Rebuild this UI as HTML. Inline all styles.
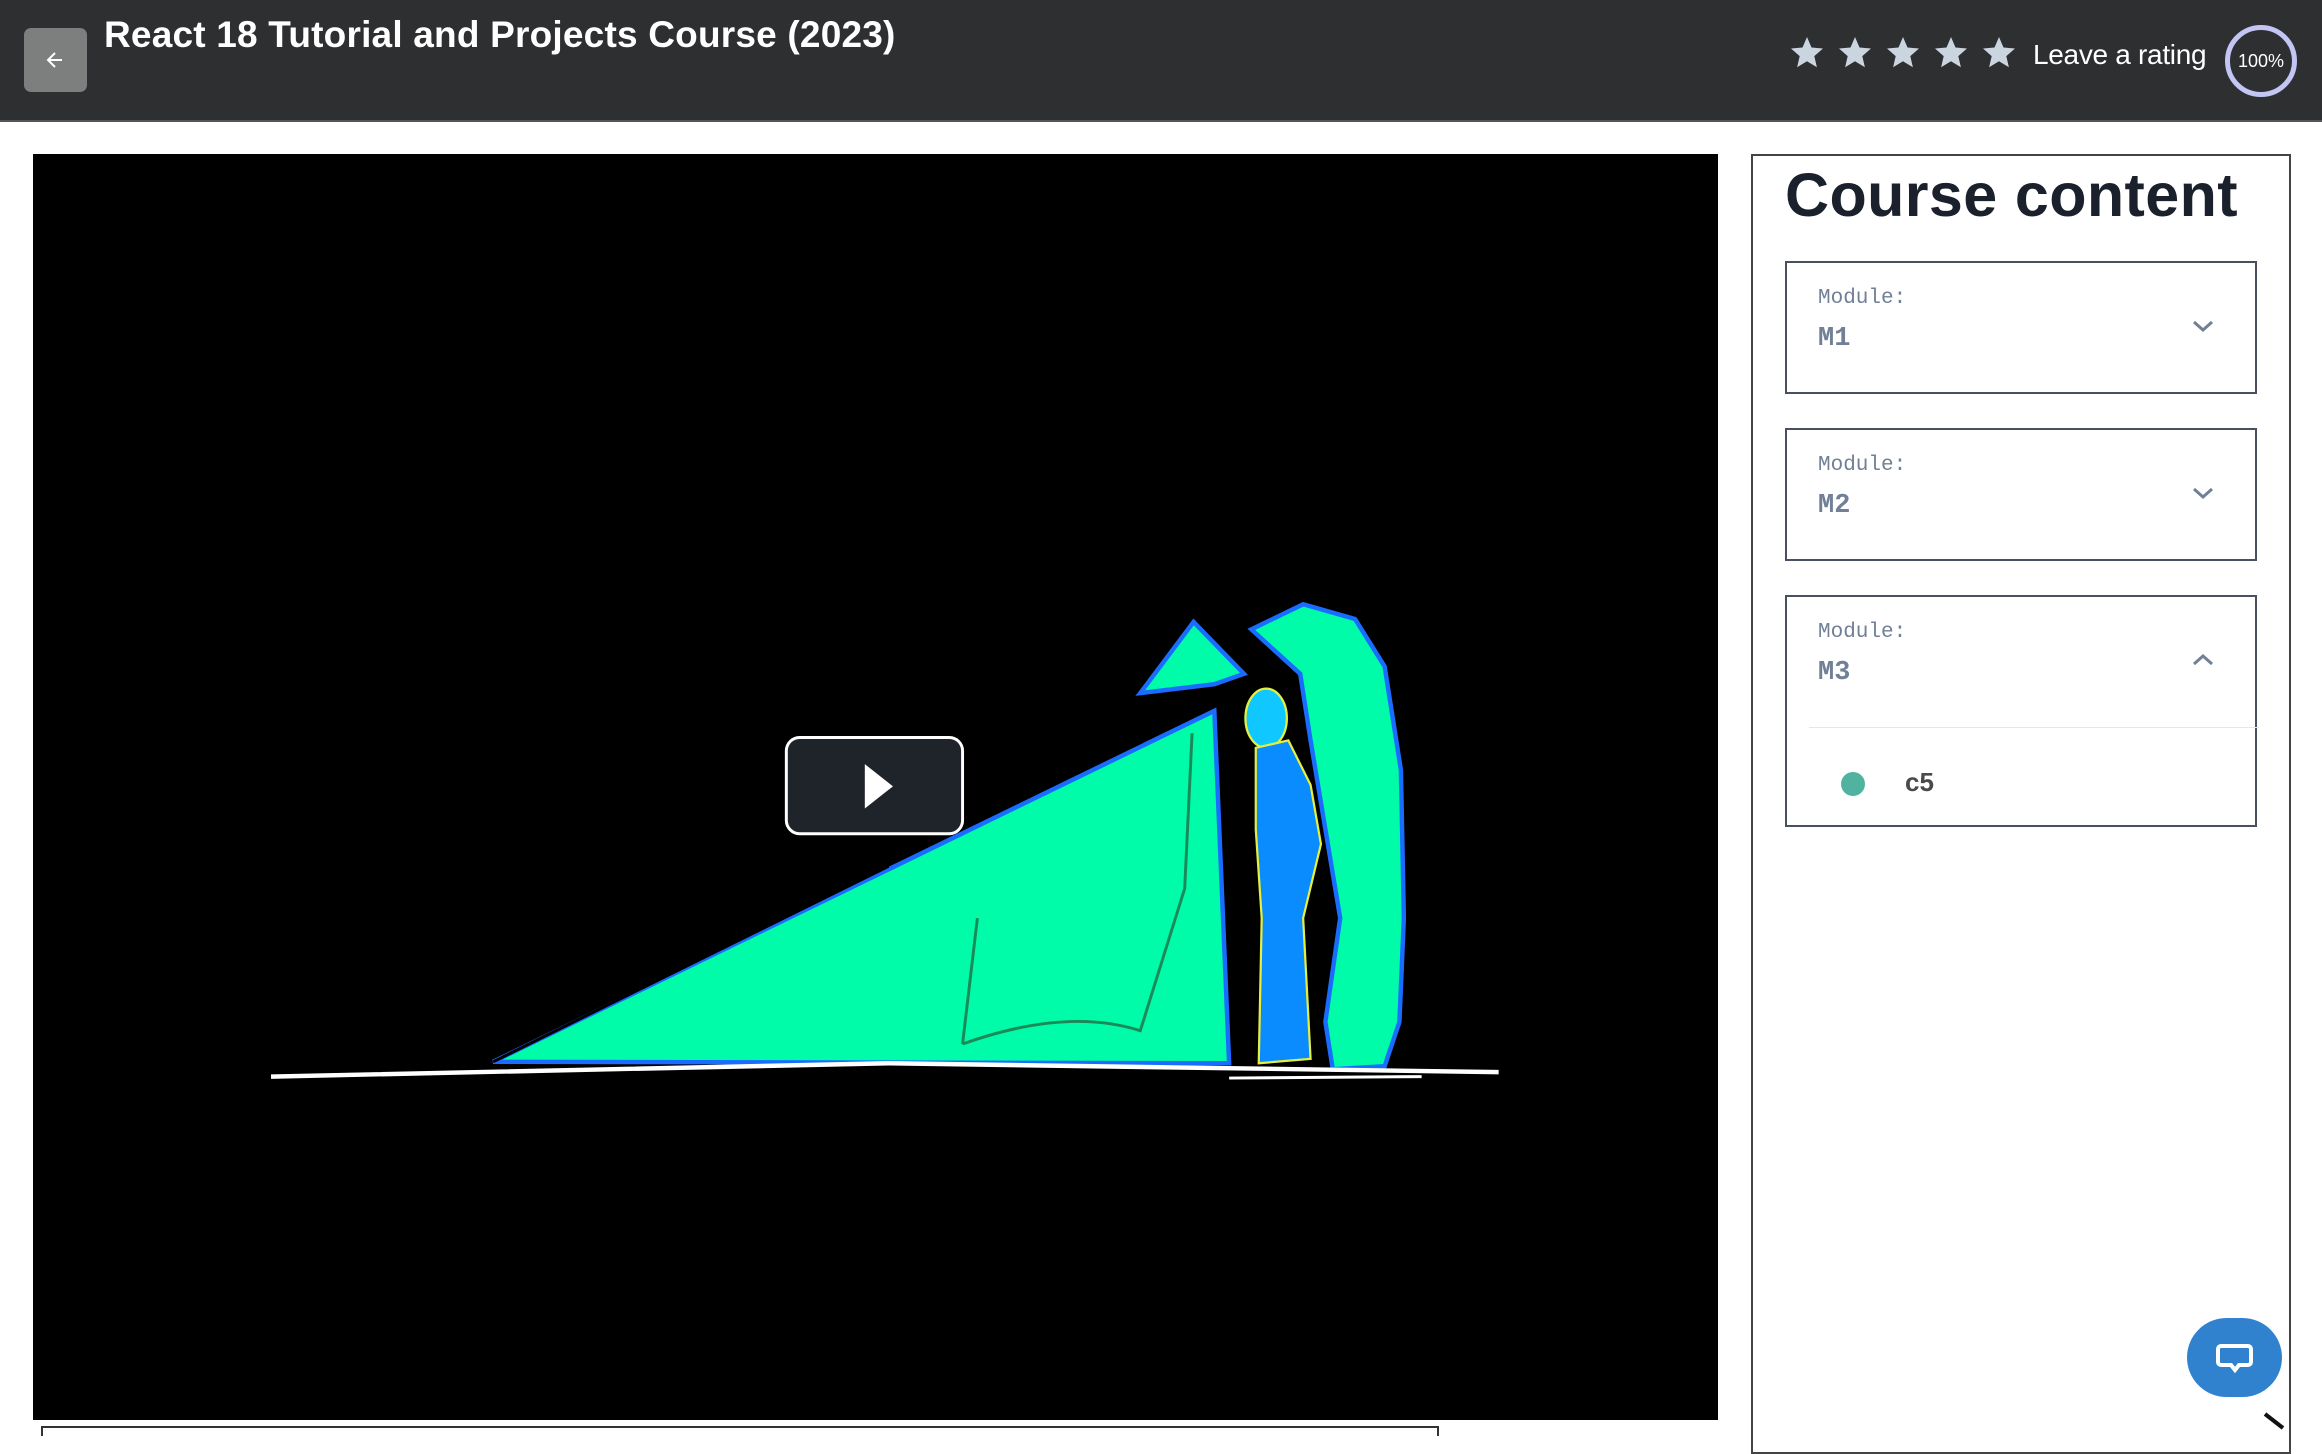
<!DOCTYPE html>
<html><head><meta charset="utf-8"><style>
*{margin:0;padding:0;box-sizing:border-box}
body{width:2322px;height:1436px;background:#fff;position:relative;overflow:hidden;font-family:"Liberation Sans",sans-serif}
.hdr{position:absolute;left:0;top:0;width:2322px;height:122px;background:#2e2f31;border-bottom:2px solid #555}
.back{position:absolute;left:24px;top:28px;width:63px;height:64px;background:#7d7e7e;border-radius:7px}
.title{position:absolute;left:104px;top:14px;color:#fff;font-weight:bold;font-size:37px;letter-spacing:0.2px}
.rate{position:absolute;left:2033px;top:39px;color:#fff;font-size:28px;letter-spacing:-0.3px}
.circ{position:absolute;left:2225px;top:25px;width:72px;height:72px;border:5px solid #c3c5f5;border-radius:50%;color:#fff;font-size:18px;text-align:center;line-height:62px}
.video{position:absolute;left:33px;top:154px;width:1685px;height:1266px;background:#000}
.under{position:absolute;left:41px;top:1426px;width:1398px;height:10px;border:2px solid #333;border-bottom:none}
.side{position:absolute;left:1751px;top:154px;width:540px;height:1300px;border:2px solid #444}
.cc{position:absolute;left:1785px;top:160px;font-size:61px;font-weight:bold;color:#1a202c;letter-spacing:0.4px}
.mod{position:absolute;left:1785px;width:472px;border:2px solid #4a5060;font-family:"Liberation Mono",monospace;color:#718096}
.mod .l{position:absolute;left:31px;top:24px;font-size:21px}
.mod .n{position:absolute;left:31px;top:61px;font-size:27px;font-weight:bold}
.mod svg{position:absolute;left:405px;top:56px}
.chat{position:absolute;left:2187px;top:1318px;width:95px;height:79px;background:#3182ce;border-radius:40px}
</style></head><body>
<div class="hdr"></div>
<div class="back"><svg width="63" height="64" viewBox="0 0 63 64"><path d="M38 32H25M31 25l-7 7 7 7" stroke="#fff" stroke-width="2" fill="none"/></svg></div>
<div class="title">React 18 Tutorial and Projects Course (2023)</div>
<svg style="position:absolute;left:1790px;top:35px" width="230" height="36" viewBox="0 0 230 36">
<g fill="#cbd5e0">
<path id="s" d="M17 2l4.5 10.5 11.5 1-8.7 7.6 2.6 11.2L17 26.3 7.1 32.3l2.6-11.2L1 13.5l11.5-1z"/>
<use href="#s" x="48"/><use href="#s" x="96"/><use href="#s" x="144"/><use href="#s" x="192"/></g></svg>
<div class="rate">Leave a rating</div>
<div class="circ">100%</div>
<div class="video"></div>
<svg style="position:absolute;left:0;top:0" width="2322" height="1436" viewBox="0 0 1568 969.7">
<g stroke="#1a6cff" stroke-width="3" fill="#00fca8">
<polygon points="333,717 820,480 830,718"/>
<polygon points="770,468 806,420 840,455 820,462"/>
<polygon points="845,425 880,408 915,418 935,450 946,520 948,620 945,690 935,720 900,722 895,690 905,620 895,560 885,500 878,455"/>
</g>
<path d="M333,717 L600,585" stroke="#000" stroke-width="2"/>
<path d="M650,705 L660,620 M650,705 Q720,680 770,696 L800,600 L805,495" stroke="#1a8a5a" stroke-width="2" fill="none"/>
<g fill="#0a8cff" stroke="#e6f03c" stroke-width="1.5">
<ellipse cx="855" cy="485" rx="14" ry="20" fill="#10c8ff"/>
<polygon points="848,505 870,500 885,530 892,570 880,620 885,715 850,718 852,620 848,560"/>
</g>
<path d="M183,727 L600,718 L1012,724" stroke="#fff" stroke-width="3" fill="none"/>
<path d="M830,728 L960,727" stroke="#fff" stroke-width="2"/>
<rect x="531" y="498" width="119" height="65" rx="9" fill="#1f242b" stroke="#fff" stroke-width="2"/>
<polygon points="584,516 603,531 584,546" fill="#fff"/>
</svg>
<div class="under"></div>
<div class="side"></div>
<div class="cc">Course content</div>
<div class="mod" style="top:261px;height:133px"><div class="l">Module:</div><div class="n">M1</div><svg width="22" height="14"><path d="M2 3l9 8 9-8" stroke="#718096" stroke-width="3" fill="none"/></svg></div>
<div class="mod" style="top:428px;height:133px"><div class="l">Module:</div><div class="n">M2</div><svg width="22" height="14"><path d="M2 3l9 8 9-8" stroke="#718096" stroke-width="3" fill="none"/></svg></div>
<div class="mod" style="top:595px;height:232px"><div class="l">Module:</div><div class="n">M3</div><svg width="22" height="14"><path d="M2 11l9-8 9 8" stroke="#718096" stroke-width="3" fill="none"/></svg>
<div style="position:absolute;left:22px;top:130px;width:450px;height:1px;background:#e2e8f0"></div>
<div style="position:absolute;left:54px;top:175px;width:24px;height:24px;border-radius:50%;background:#4fb3a0"></div>
<div style="position:absolute;left:118px;top:170px;font-family:'Liberation Sans',sans-serif;font-weight:bold;font-size:26px;color:#4a4a4a">c5</div></div>
<div class="chat"><svg width="95" height="79" viewBox="0 0 95 79"><path d="M34 28h27a3 3 0 0 1 3 3v13a3 3 0 0 1-3 3H52l-4 5-4-5H34a3 3 0 0 1-3-3V31a3 3 0 0 1 3-3z" stroke="#fff" stroke-width="4" fill="none"/></svg></div>
<svg style="position:absolute;left:2262px;top:1410px" width="30" height="26"><path d="M3 4l18 14" stroke="#111" stroke-width="4"/></svg>
</body></html>
